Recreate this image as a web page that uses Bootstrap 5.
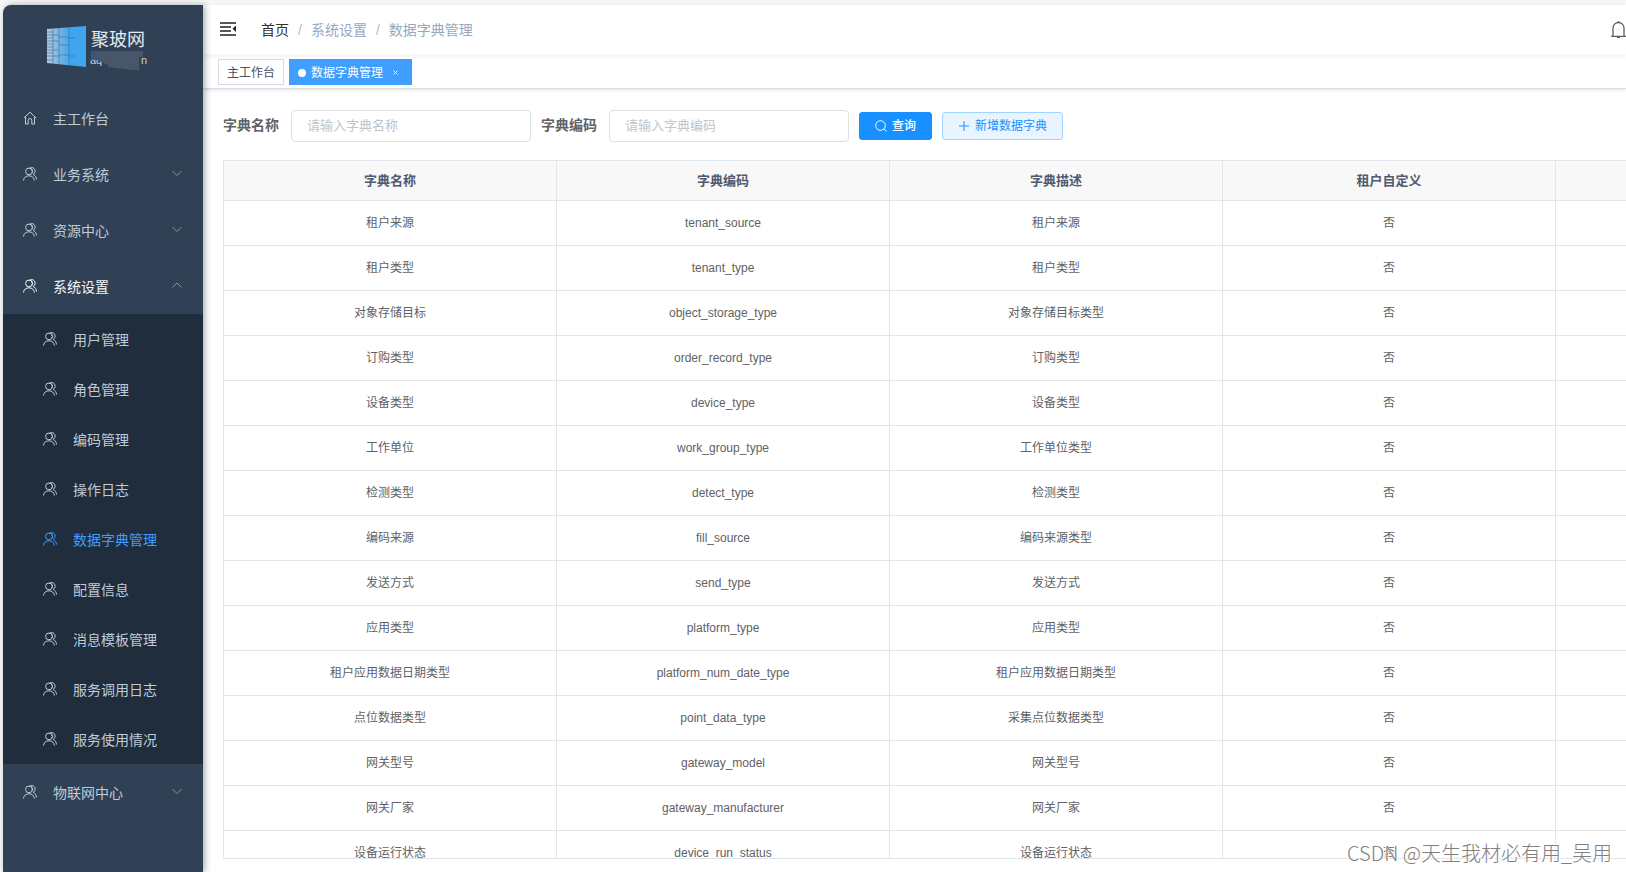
<!DOCTYPE html>
<html lang="zh-CN">
<head>
<meta charset="utf-8">
<meta name="viewport" content="width=device-width, initial-scale=1">
<title>数据字典管理</title>
<link href="https://cdn.jsdelivr.net/npm/bootstrap@5.3.0/dist/css/bootstrap.min.css" rel="stylesheet">
<style>
body{font-family:"Liberation Sans","Noto Sans CJK SC",sans-serif;font-size:14px;line-height:20px;color:#606266;background:#f6f6f6}
.app{height:100vh;padding:5px 0 0 3px}
.side{width:200px;background:#304156;border-top-left-radius:8px;box-shadow:2px 0 6px rgba(0,21,41,.35);z-index:2}
.brand{height:85px;padding:0 0 0 43px}
.brand svg{display:block}
.side a{color:#bfcbd9;text-decoration:none}
.side .top-item{height:56px;padding:2px 21px 0 20px}
.side .sub-item{height:50px;padding:2px 20px 0 40px}
.side .ico{width:14px;height:14px;margin:0 16px 2px 0;flex:none}
.side .chev{width:10px;height:10px;color:#8592a0;margin-bottom:5px}
.side .open{color:#f4f4f5}
.side .sub-menu{background:#1f2d3d}
.side .current{color:#409eff}
.ico,.chev{fill:none;stroke:currentColor}
.main-pane{background:#fff;min-width:0}
.topbar{height:50px;padding:0 0 0 17px;box-shadow:0 1px 4px rgba(0,21,41,.08)}
.topbar .crumbs{--bs-breadcrumb-item-padding-x:9px;--bs-breadcrumb-divider-color:#b4bac6;--bs-breadcrumb-item-active-color:#97a8be;font-size:14px;margin-left:25px}
.crumbs a{color:#303133;text-decoration:none}
.icon-btn{color:#222;line-height:0}
.topbar .fold{margin-bottom:2px}
.tabs{height:34px;padding:0 15px;gap:5px;border-bottom:1px solid #d8dce5;box-shadow:0 1px 3px rgba(0,0,0,.12)}
.tabs a{height:26px;padding:2px 8px 0;font-size:12px;border:1px solid #d8dce5;color:#495060;text-decoration:none}
.tabs a.current{background:#409eff;border-color:#409eff;color:#fff;padding-right:13px}
.tabs .dot{width:8px;height:8px;background:#fff;margin-right:5px}
.tabs .close-x{width:5px;height:5px;stroke:#fff;margin-left:10px}
.content{padding:21px 0 13px 20px;min-height:0}
.search{gap:10px;margin-bottom:18px}
.search label{font-weight:700;margin-right:2px;line-height:18px;padding-bottom:2px}
.search input{width:240px;height:32px;border-color:#dcdfe6;border-radius:4px;font-size:13px;padding:0 15px 2px}
.search input::placeholder{color:#c0c4cc}
.search .btn{height:28px;font-size:12px;line-height:16px;border-radius:3px;padding:0 15px;gap:5px}
.btn-find{background:#1890ff;border-color:#1890ff;color:#fff;font-weight:500}
.btn-new{background:#e8f4ff;border-color:#a3d3ff;color:#1890ff}
.grid-box{border:1px solid #dfe6ec;border-right:0;min-height:0}
.dict{table-layout:fixed;border-collapse:separate;border-spacing:0;margin:0;font-size:12px;text-align:center;color:#606266}
.dict col.w{width:333px}
.dict th,.dict td{border:0 solid #dfe6ec;border-width:0 1px 1px 0;padding:0;vertical-align:middle;height:45px;color:#606266}
.dict th{height:40px;font-size:13px;background:#f8f8f9;color:#515a6e}
.dict th:last-child,.dict td:last-child{border-right:0}
.watermark{right:14px;bottom:7px;font-family:"Noto Sans CJK SC",sans-serif;font-size:20px;font-weight:300;line-height:24px;color:#808080;text-shadow:1px 1px 0 #fff,-1px -1px 0 #fff;z-index:3}
</style>
</head>
<body>
<svg width="0" height="0" class="position-absolute" aria-hidden="true">
<symbol id="user" viewBox="0 0 14 14"><circle cx="6" cy="4.400" r="3.400"/><path d="M.5 13.500C.7 10.500 3 8.800 6 8.800s5 1.700 5.400 4.700M6.200 1.600C7 .8 8 .5 8.900.6c1.900.1 3.200 1.600 3.200 3.500 0 1.500-.8 2.700-2 3.300 2 .8 3.300 2.900 3.400 5.100M7.500 1.200c1.600 1 2.400 3 1.600 4.700"/></symbol>
<symbol id="down" viewBox="0 0 10 10"><path d="M.5 3 5 7.500 9.500 3"/></symbol>
<symbol id="up" viewBox="0 0 10 10"><path d="M.5 7.500 5 3l4.500 4.500"/></symbol>
</svg>
<div class="app d-flex overflow-hidden position-relative">
<aside class="side flex-shrink-0 position-relative">
<div class="brand">
<svg width="105" height="74" viewBox="46 5 105 74" role="img" aria-label="聚玻网">
<defs><linearGradient id="glass"><stop offset="0" stop-color="#b9c9d8"/><stop offset=".35" stop-color="#72b2e6"/><stop offset=".6" stop-color="#3fa5ef"/></linearGradient></defs>
<path d="M47 29 86 26V67L47 63Z" fill="url(#glass)"/>
<path d="M53 29V64M59 28V64M69 28V65M47 32H53M47 35H59M47 38H53M47 41H59M47 44H53M47 47H53M47 50H59M47 53H53M47 56H59M47 60H53M59 37H69M59 55H69M59 45H69M69 38H75M69 56H75" stroke="#2b6b9e" stroke-width="1" opacity=".55" fill="none"/>
<text x="91" y="46" font-size="18" fill="#e5eaf0">聚玻网</text>
<text x="90" y="64" font-size="11" fill="#c9d1da">aq</text><text x="141" y="64" font-size="11" fill="#c9d1da">n</text>
<path d="M96 51H143V57H139V70H132L108 67V65L97 60Z" fill="#475669"/><path d="M91 51H97V60H91Z" fill="#3a5674"/>
</svg>
</div>
<nav id="menu" aria-label="主菜单"></nav>
</aside>
<main class="main-pane flex-grow-1 d-flex flex-column">
<header class="topbar d-flex align-items-center flex-shrink-0">
<button class="icon-btn fold btn p-0 border-0" aria-label="收起菜单"><svg width="16" height="16" viewBox="0 0 16 16"><path d="M0 2H16M0 6H11M0 10H11M0 14H16" stroke="currentColor" stroke-width="1.500"/><path d="M16 4.500V11L12.500 7.800Z" fill="currentColor"/></svg></button>
<nav aria-label="breadcrumb"><ol class="breadcrumb crumbs mb-0"><li class="breadcrumb-item"><a href="#">首页</a></li><li class="breadcrumb-item active">系统设置</li><li class="breadcrumb-item active">数据字典管理</li></ol></nav>
<button class="icon-btn btn p-0 border-0 ms-auto" aria-label="通知"><svg width="16" height="18" viewBox="0 0 16 18" fill="none" stroke="#5a5e66" stroke-width="1.300"><path d="M3 15V7a5.500 5.500 0 0 1 11 0v8M1 15.300H16M8.500 0V2M7 16.300H10"/></svg></button>
</header>
<nav class="tabs d-flex align-items-center flex-shrink-0" aria-label="标签页"><a href="#" class="d-flex align-items-center">主工作台</a><a href="#" class="current d-flex align-items-center"><span class="dot rounded-circle"></span>数据字典管理<svg class="close-x" viewBox="0 0 6 6"><path d="M.5.5 5.500 5.500M5.500.5.5 5.500"/></svg></a></nav>
<section class="content flex-grow-1 d-flex flex-column">
<form class="search d-flex align-items-center flex-shrink-0">
<label for="dname">字典名称</label><input id="dname" class="form-control" type="text" placeholder="请输入字典名称">
<label for="dcode">字典编码</label><input id="dcode" class="form-control" type="text" placeholder="请输入字典编码">
<button type="button" class="btn btn-find d-flex align-items-center"><svg width="12" height="12" viewBox="0 0 12 12" fill="none" stroke="currentColor"><circle cx="5.500" cy="5.500" r="4.800"/><path d="M9 9l2.500 2.500"/></svg>查询</button>
<button type="button" class="btn btn-new d-flex align-items-center"><svg width="12" height="12" viewBox="0 0 12 12" stroke="currentColor"><path d="M6 1V11M1 6H11"/></svg>新增数据字典</button>
</form>
<div class="grid-box flex-grow-1 overflow-hidden">
<table class="dict table">
<colgroup><col class="w"><col class="w"><col class="w"><col class="w"><col></colgroup>
<thead><tr><th>字典名称</th><th>字典编码</th><th>字典描述</th><th>租户自定义</th><th></th></tr></thead>
<tbody id="rows"></tbody>
</table>
</div>
</section>
</main>
<div class="watermark position-absolute">CSDN @天生我材必有用_吴用</div>
</div>
<script>
const icon = id => `<svg class="ico"><use href="#${id}"/></svg>`;
const topItem = (t, dir, cls = '') => `<a href="#" class="top-item d-flex align-items-center ${cls}">${icon('user')}<span class="flex-grow-1">${t}</span><svg class="chev"><use href="#${dir}"/></svg></a>`;
const subs = ['用户管理','角色管理','编码管理','操作日志','数据字典管理','配置信息','消息模板管理','服务调用日志','服务使用情况'];
document.getElementById('menu').innerHTML =
  `<a href="#" class="top-item d-flex align-items-center"><svg class="ico" viewBox="0 0 14 14"><path d="M.8 7 7 1.200 13.200 7M2.500 5.500V13H5.200V9.300a1.800 1.800 0 0 1 3.600 0V13H11.500V5.500"/></svg>主工作台</a>` +
  topItem('业务系统','down') + topItem('资源中心','down') + topItem('系统设置','up','open') +
  `<div class="sub-menu">${subs.map(s => `<a href="#" class="sub-item d-flex align-items-center ${s === '数据字典管理' ? 'current' : ''}">${icon('user')}${s}</a>`).join('')}</div>` +
  topItem('物联网中心','down');
const data = [
  ['租户来源','tenant_source','租户来源'],['租户类型','tenant_type','租户类型'],
  ['对象存储目标','object_storage_type','对象存储目标类型'],['订购类型','order_record_type','订购类型'],
  ['设备类型','device_type','设备类型'],['工作单位','work_group_type','工作单位类型'],
  ['检测类型','detect_type','检测类型'],['编码来源','fill_source','编码来源类型'],
  ['发送方式','send_type','发送方式'],['应用类型','platform_type','应用类型'],
  ['租户应用数据日期类型','platform_num_date_type','租户应用数据日期类型'],['点位数据类型','point_data_type','采集点位数据类型'],
  ['网关型号','gateway_model','网关型号'],['网关厂家','gateway_manufacturer','网关厂家'],
  ['设备运行状态','device_run_status','设备运行状态']];
document.getElementById('rows').innerHTML = data.map(r => `<tr>${r.map(c => `<td>${c}</td>`).join('')}<td>否</td><td></td></tr>`).join('');
</script>
<script src="https://cdn.jsdelivr.net/npm/bootstrap@5.3.0/dist/js/bootstrap.bundle.min.js"></script>
</body>
</html>
